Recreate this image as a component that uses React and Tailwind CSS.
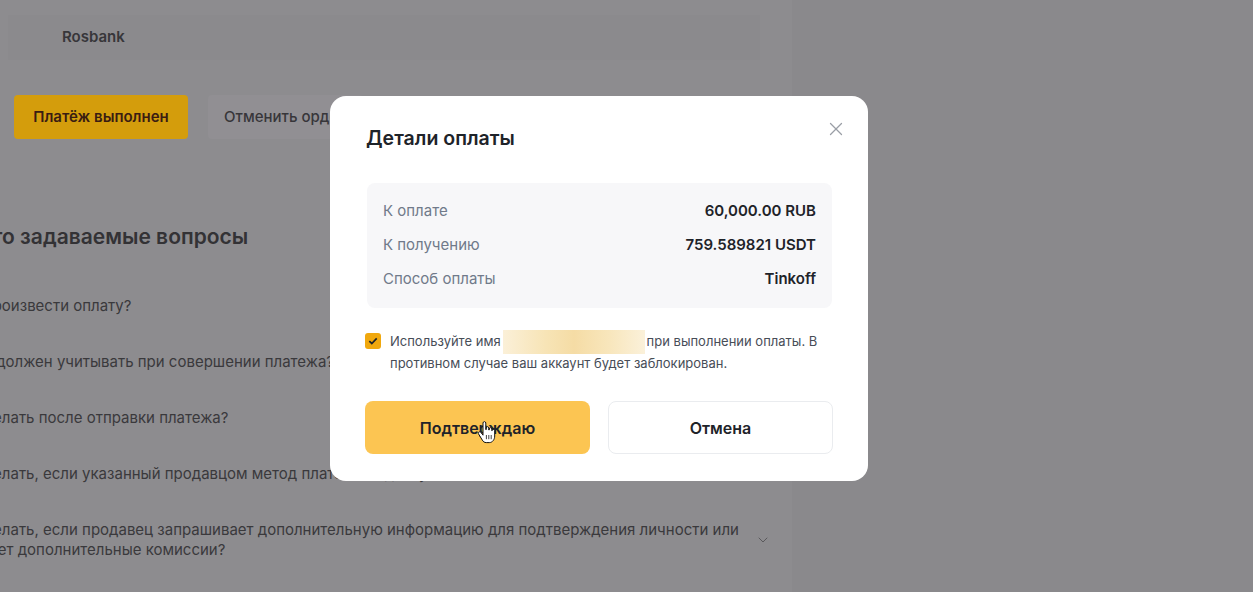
import React from 'react';
import { X, ChevronDown } from 'lucide-react';

const faqItems = [
    'Как произвести оплату?',
    'Что я должен учитывать при совершении платежа?',
    'Что делать после отправки платежа?',
    'Что делать, если указанный продавцом метод платежа недоступен?',
    'Что делать, если продавец запрашивает дополнительную информацию для подтверждения личности или взимает дополнительные комиссии?',
];

const details = [
    { label: 'К оплате', value: '60,000.00 RUB' },
    { label: 'К получению', value: '759.589821 USDT' },
    { label: 'Способ оплаты', value: 'Tinkoff' },
];

const HandCursor = () => (
    <svg width="19" height="23" viewBox="0 0 19 23" className="absolute left-[112px] top-[20px]">
        <path
            d="M6 2c0-.8.6-1.4 1.4-1.4S8.8 1.2 8.8 2v6.6h.4V7c0-.8.6-1.3 1.3-1.3s1.3.5 1.3 1.3v2h.4V8c0-.8.6-1.3 1.3-1.3s1.3.5 1.3 1.3v1.6h.3c0-.8.6-1.2 1.3-1.2s1.3.5 1.3 1.2V15c0 3.5-2.2 6.6-5.4 6.6H9.3c-2 0-3.1-1-4-2.5L1.6 13c-.5-.8-.3-1.6.4-2s1.5-.2 2 .5L6 14.2Z"
            fill="#fff"
            stroke="#111"
            strokeWidth="1"
            strokeLinejoin="round"
        />
        <path d="M9.4 14v4.2M11.8 14v4.2M14.2 14v4.2" stroke="#111" strokeWidth="0.8" />
    </svg>
);

const App = () => {
    return (
        <div
            className="relative w-full h-[592px] overflow-hidden bg-[#8a898c] text-[#3a393c]"
            style={{ fontFamily: 'Inter, "Noto Sans", sans-serif' }}
        >
            {/* Dimmed page behind the dialog */}
            <div className="w-[792px] h-full bg-[#8d8c8f] pt-[15px]">
                <div className="ml-2 w-[752px] h-[45px] bg-[#8b8a8d] flex items-center pl-[54px] text-[15px] font-semibold text-[#37363a]">
                    Rosbank
                </div>

                <div className="flex gap-5 ml-[14px] mt-[35px]">
                    <button className="w-[174px] h-11 rounded-[4px] bg-[#d49d0c] text-[15px] font-semibold text-[#3a1c12]">
                        Платёж выполнен
                    </button>
                    <button className="h-11 px-4 rounded-[4px] bg-[#918f93] text-[15px] font-medium text-[#37363a]">
                        Отменить ордер
                    </button>
                </div>

                {/* FAQ */}
                <div className="ml-[-47px] w-[820px] mt-[83px]">
                    <h2 className="text-[21px] leading-[30px] font-semibold text-[#333235]">
                        Часто задаваемые вопросы
                    </h2>
                    <div className="mt-[26px] flex flex-col">
                        {faqItems.map((item, i) => (
                            <div key={i} className="flex items-center justify-between py-[18px]">
                                <span className="w-[793px] text-[15px] leading-[20px]">{item}</span>
                                <ChevronDown size={16} className="text-[#5a595c] mr-[2px] shrink-0" strokeWidth={1.5} />
                            </div>
                        ))}
                    </div>
                </div>
            </div>

            {/* Dialog */}
            <div className="absolute left-[330px] top-[96px] w-[538px] h-[385px] bg-white rounded-[16px] px-[35px] pt-[26px]">
                <div className="flex items-start justify-between">
                    <h3 className="text-[19.5px] leading-[32px] font-semibold text-[#1e2329] pl-px">Детали оплаты</h3>
                    <X size={22} strokeWidth={1.4} className="text-[#9a9ea6] mt-[-4px] mr-[-14px]" />
                </div>

                <div className="mt-[29px] ml-[2px] w-[465px] bg-[#f7f7f9] rounded-[8px] px-4 pt-[11px] pb-[12px]">
                    {details.map((row) => (
                        <div key={row.label} className="flex items-center justify-between h-[34px]">
                            <span className="text-[15px] text-[#707a8a]">{row.label}</span>
                            <span className="text-[15px] font-semibold text-[#1e2329]">{row.value}</span>
                        </div>
                    ))}
                </div>

                <div className="flex items-start gap-[9px] mt-[22px]">
                    <div className="mt-[3px] w-4 h-4 shrink-0 rounded-[3px] bg-[#f0a80e] flex items-center justify-center">
                        <svg width="10" height="8" viewBox="0 0 10 8">
                            <path d="M1.3 4.2 3.8 6.5 8.7 1.4" fill="none" stroke="#1e2329" strokeWidth="1.7" />
                        </svg>
                    </div>
                    <p className="text-[13px] leading-[22px] text-[#474d57] w-[442px]">
                        Используйте имя
                        <span className="inline-block align-middle w-[142px] h-[24px] -my-1 mr-[2px] ml-[2px] bg-[linear-gradient(90deg,#fbf0d8_0%,#f7e4b6_30%,#f5dca5_50%,#f8e6bc_75%,#fbf1da_100%)]" />
                        при выполнении оплаты. В противном случае ваш аккаунт будет заблокирован.
                    </p>
                </div>

                <div className="flex gap-[18px] mt-[27px]">
                    <button className="relative w-[225px] h-[53px] rounded-[8px] bg-[#fcc552] text-[16px] font-semibold text-[#1e2329]">
                        Подтверждаю
                        <HandCursor />
                    </button>
                    <button className="w-[225px] h-[53px] rounded-[8px] bg-white border border-[#eaecef] text-[16px] font-semibold text-[#1e2329]">
                        Отмена
                    </button>
                </div>
            </div>
        </div>
    );
};

export default App;
